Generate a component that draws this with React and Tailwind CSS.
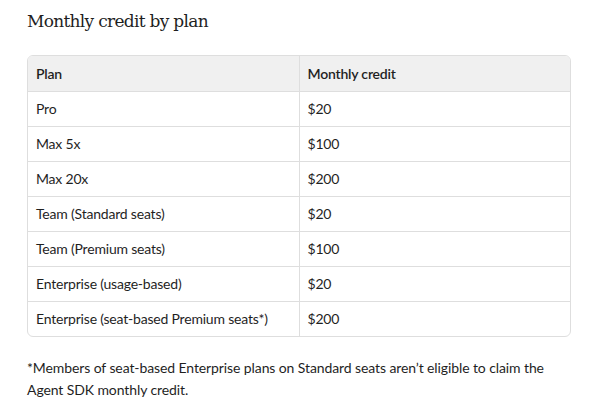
const rows = [
  ['Pro', '$20'],
  ['Max 5x', '$100'],
  ['Max 20x', '$200'],
  ['Team (Standard seats)', '$20'],
  ['Team (Premium seats)', '$100'],
  ['Enterprise (usage-based)', '$20'],
  ['Enterprise (seat-based Premium seats*)', '$200'],
];

export default function App() {
  return (
    <div className="w-[590px] h-[405px] bg-white px-[27px] pt-[9px] text-[#1f1f1f]" style={{ fontFamily: 'Lato, sans-serif' }}>
      <h2 className="text-[17px] leading-[24px] tracking-[-0.7px]" style={{ fontFamily: '"DejaVu Serif", serif' }}>
        Monthly credit by plan
      </h2>

      <div className="mt-[22px] w-[544px] rounded-[6px] border border-[#dedede] overflow-hidden">
        <table className="w-full text-left border-collapse text-[14px] tracking-[-0.2px]">
          <thead>
            <tr className="bg-[#f0f0f0]">
              <th className="w-[271px] h-[35px] px-[8px] font-semibold border-r border-[#dedede]">Plan</th>
              <th className="h-[35px] px-[8px] font-semibold">Monthly credit</th>
            </tr>
          </thead>
          <tbody>
            {rows.map(([plan, credit]) => (
              <tr key={plan} className="border-t border-[#dedede]">
                <td className="h-[35px] px-[8px] border-r border-[#dedede]">{plan}</td>
                <td className="h-[35px] px-[8px]">{credit}</td>
              </tr>
            ))}
          </tbody>
        </table>
      </div>

      <p className="mt-[20px] text-[14px] leading-[22px] tracking-[-0.1px]">
        *Members of seat-based Enterprise plans on Standard seats aren’t eligible to claim the Agent SDK monthly credit.
      </p>
    </div>
  );
}
